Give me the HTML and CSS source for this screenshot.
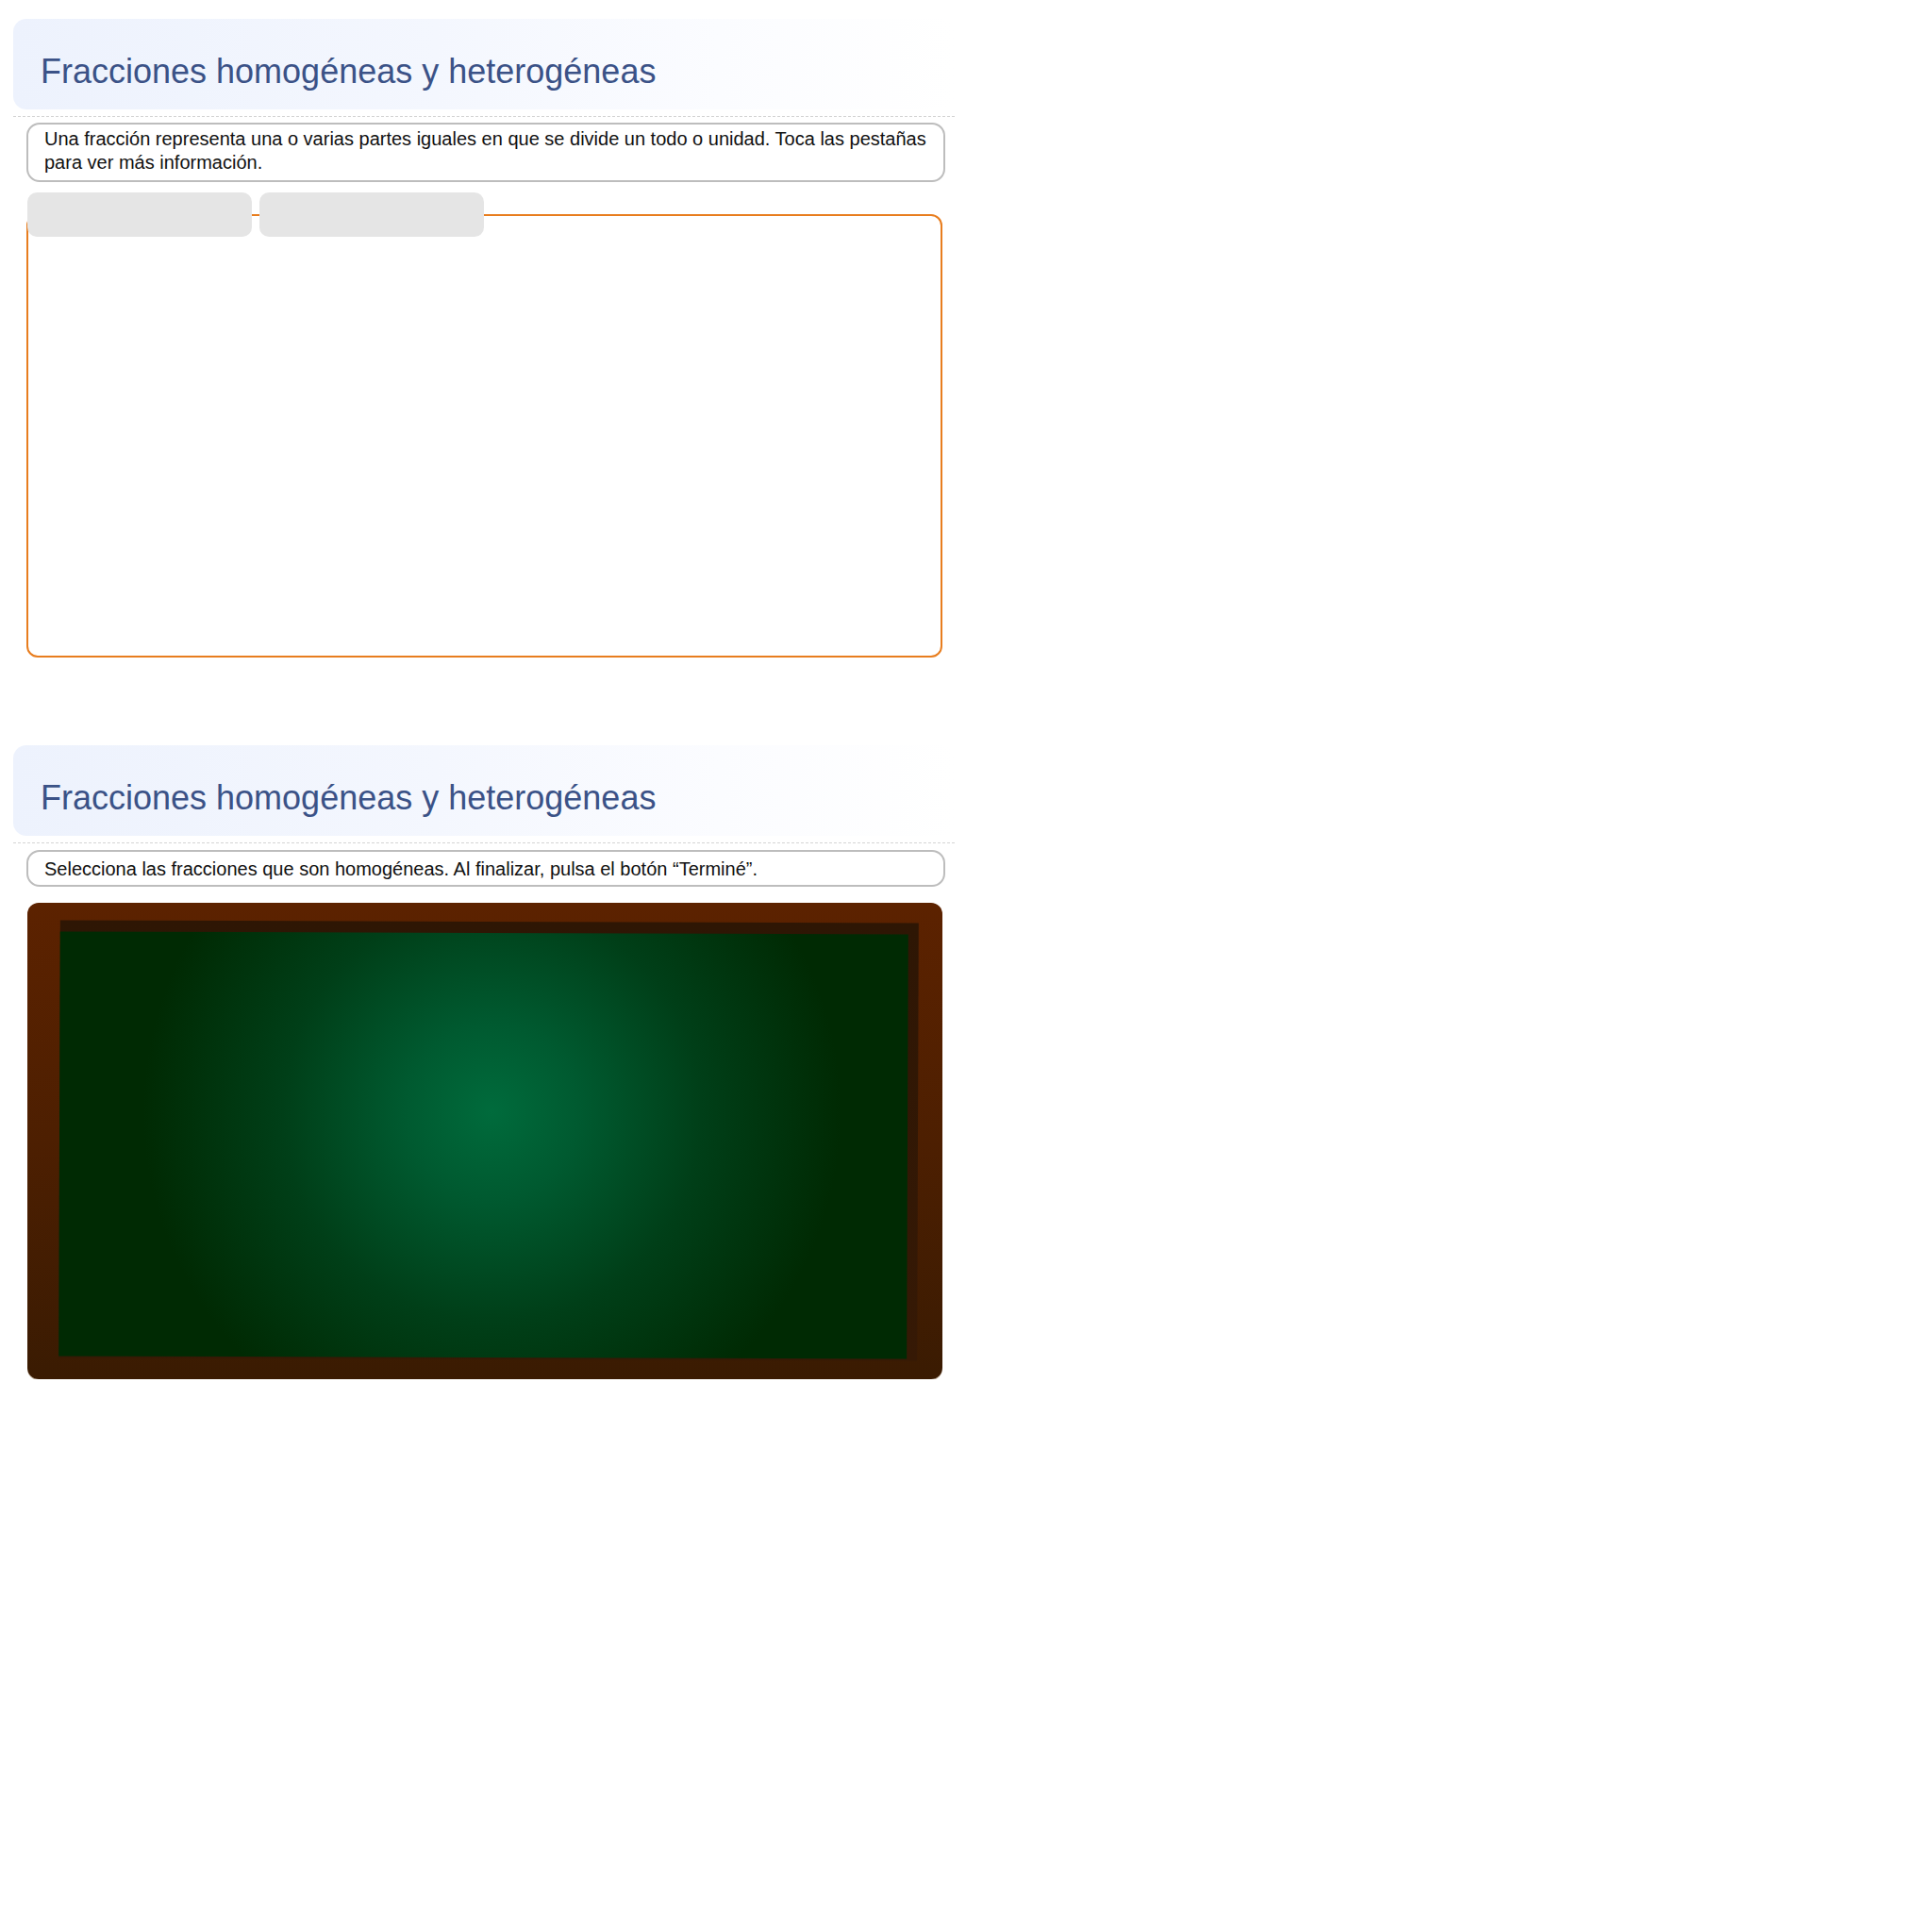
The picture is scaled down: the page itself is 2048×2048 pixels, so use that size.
FILE: index.html
```html
<!DOCTYPE html>
<html lang="es">
<head>
<meta charset="utf-8">
<title>Fracciones homogéneas y heterogéneas</title>
<link rel="stylesheet" href="styles.css">
</head>
<body>
<div class="page">
  <section class="activity first">
    <header class="head"><h1 class="title">Fracciones homogéneas y heterogéneas</h1></header>
    <div class="divider"></div>
    <div class="instr">Una fracción representa una o varias partes iguales en que se divide un todo o unidad. Toca las pestañas para ver más información.</div>
    <div class="tabs">
      <div class="tab"></div>
      <div class="tab"></div>
    </div>
    <div class="panel"></div>
  </section>
  <section class="activity second">
    <header class="head"><h1 class="title">Fracciones homogéneas y heterogéneas</h1></header>
    <div class="divider"></div>
    <div class="instr single">Selecciona las fracciones que son homogéneas. Al finalizar, pulsa el botón “Terminé”.</div>
    <div class="board">
      <div class="board-inner">
        <div class="board-green"></div>
      </div>
    </div>
  </section>
</div>
</body>
</html>
```
FILE: styles.css
```css
html, body {
  margin: 0;
  padding: 0;
  background: #ffffff;
}
body {
  font-family: "Liberation Sans", Arial, sans-serif;
  color: #111;
}
.page {
  width: 998px;
  padding-left: 14px;
}
.activity.first {
  padding-top: 20px;
}
.activity.second {
  padding-top: 93px;
}
.head {
  height: 96px;
  border-radius: 14px;
  background: linear-gradient(90deg, #edf2fd 0%, #f4f7fe 45%, #fbfcff 75%, #ffffff 100%);
  padding: 36px 0 0 29px;
  box-sizing: border-box;
}
.title {
  margin: 0;
  font-weight: normal;
  font-size: 36px;
  line-height: 40px;
  color: #3b5287;
}
.divider {
  margin-top: 7px;
  border-top: 1px dashed #d4d4d4;
  height: 0;
}
.instr {
  margin: 6px 10px 0 14px;
  border: 2px solid #bdbdbd;
  border-radius: 14px;
  padding: 3px 14px 6px 17px;
  font-size: 20px;
  line-height: 25px;
  color: #111;
}
.instr.single {
  margin-top: 7px;
  padding-top: 6px;
  padding-bottom: 4px;
}
.tabs {
  display: flex;
  gap: 8px;
  margin: 11px 0 -24px 15px;
  position: relative;
  z-index: 1;
}
.tab {
  width: 238px;
  height: 47px;
  background: #e5e5e5;
  border-radius: 10px;
}
.panel {
  margin-left: 14px;
  width: 971px;
  height: 470px;
  box-sizing: border-box;
  border: 2px solid #e87d1e;
  border-radius: 12px;
}
.board {
  margin: 17px 0 0 15px;
  width: 970px;
  height: 505px;
  box-sizing: border-box;
  border-radius: 12px;
  background: linear-gradient(180deg, #5c2200 0%, #4d1f01 50%, #3a1b02 100%);
  padding: 20px 26px 21px 34px;
  box-shadow: 0 1px 0 #b8a58e;
}
.board-inner {
  height: 100%;
  box-sizing: border-box;
  background: linear-gradient(180deg, #2e1604 0%, #361905 100%);
  padding: 12px 11px 2px 0;
  transform: rotate(0.2deg);
}
.board-green {
  height: 100%;
  background: radial-gradient(circle 370px at 51% 42%, #006b3c 0%, #005a30 25%, #003f18 60%, #002a03 100%);
}
```
